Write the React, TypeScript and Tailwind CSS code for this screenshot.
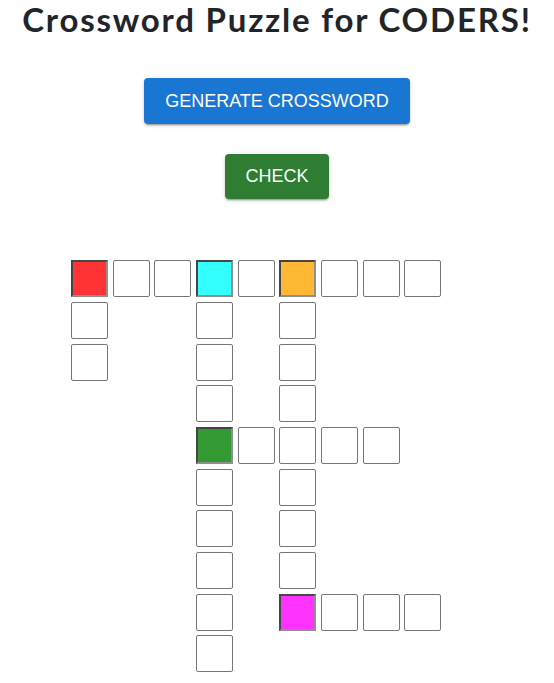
import { clsx } from 'clsx'

// . = empty, W = white cell, letters = clue start colours
const LAYOUT = [
  'RWWCWOWWW.',
  'W..W.W....',
  'W..W.W....',
  '...W.W....',
  '...GWWWW..',
  '...W.W....',
  '...W.W....',
  '...W.W....',
  '...W.MWWW.',
  '...W......',
]

const START_COLORS: Record<string, string> = {
  R: 'bg-[#ff3333]',
  C: 'bg-[#33ffff]',
  O: 'bg-[#ffb833]',
  G: 'bg-[#339933]',
  M: 'bg-[#ff33ff]',
}

const shadow = 'shadow-[0px_3px_1px_-2px_rgba(0,0,0,0.2),0px_2px_2px_0px_rgba(0,0,0,0.14),0px_1px_5px_0px_rgba(0,0,0,0.12)]'

function Cell({ kind }: { kind: string }) {
  if (kind === '.') return <div />
  if (kind === 'W') {
    return (
      <div className="flex items-center justify-center">
        <div className="w-[37px] h-[37px] border border-[#767676] rounded-[2px] bg-white" />
      </div>
    )
  }
  return (
    <div className="flex items-center justify-center">
      <div
        className={clsx(
          'w-[37px] h-[37px] border-2 border-t-[#464646] border-l-[#464646] border-b-[#8f8f8f] border-r-[#8f8f8f]',
          START_COLORS[kind]
        )}
      />
    </div>
  )
}

export default function App() {
  return (
    <div className="min-h-screen bg-white flex flex-col items-center font-['Liberation_Sans',Arial,sans-serif]">
      <h1 className="text-[33px] leading-[38px] font-bold text-[#212529] font-['Lato',sans-serif] tracking-[1.8px]">
        Crossword Puzzle for CODERS!
      </h1>

      <button className={clsx('mt-[40px] h-[46px] px-[21px] rounded-[4px] bg-[#1976d2] text-white text-[18px] uppercase', shadow)}>
        Generate Crossword
      </button>

      <button className={clsx('mt-[30px] h-[45px] px-[20px] rounded-[4px] bg-[#2e7d32] text-white text-[18px] uppercase', shadow)}>
        Check
      </button>

      <div className="mt-[59px] grid grid-cols-[repeat(10,41.667px)] auto-rows-[41.667px]">
        {LAYOUT.map((row, r) =>
          row.split('').map((kind, c) => <Cell key={`${r}-${c}`} kind={kind} />)
        )}
      </div>
    </div>
  )
}
